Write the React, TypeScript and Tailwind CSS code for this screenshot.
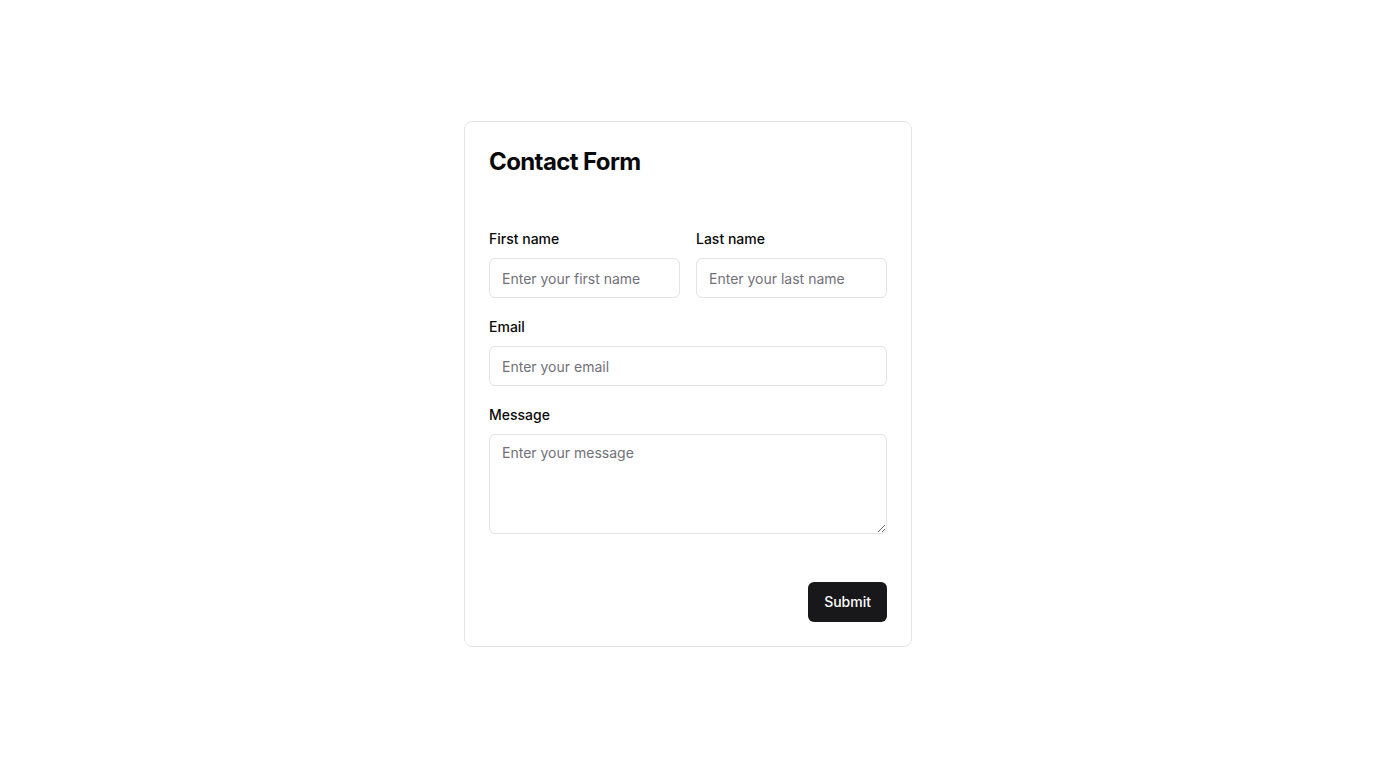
import { useState } from "react";

const inputClass =
  "w-full h-10 rounded-md border border-[#e4e4e7] bg-white px-3 text-sm text-[#09090b] placeholder:text-[#71717a] focus:outline-none";

const labelClass = "text-sm leading-[26px] font-medium";

const ContactForm = () => {
  const [firstName, setFirstName] = useState("");
  const [lastName, setLastName] = useState("");
  const [email, setEmail] = useState("");
  const [message, setMessage] = useState("");

  return (
    <div
      className="min-h-screen w-full bg-white flex items-center justify-center text-[#09090b]"
      style={{ fontFamily: "Inter, 'Noto Sans', sans-serif" }}
    >
      <div className="w-[448px] rounded-lg border border-[#e4e4e7] bg-white p-6 flex flex-col">
        <h1 className="text-2xl font-bold tracking-tight">Contact Form</h1>

        <form
          className="mt-12 flex flex-col gap-4"
          onSubmit={(e) => e.preventDefault()}
        >
          <div className="grid grid-cols-2 gap-4">
            <div className="flex flex-col gap-1.5">
              <label htmlFor="firstName" className={labelClass}>
                First name
              </label>
              <input
                id="firstName"
                type="text"
                placeholder="Enter your first name"
                value={firstName}
                onChange={(e) => setFirstName(e.target.value)}
                className={inputClass}
              />
            </div>
            <div className="flex flex-col gap-1.5">
              <label htmlFor="lastName" className={labelClass}>
                Last name
              </label>
              <input
                id="lastName"
                type="text"
                placeholder="Enter your last name"
                value={lastName}
                onChange={(e) => setLastName(e.target.value)}
                className={inputClass}
              />
            </div>
          </div>

          <div className="flex flex-col gap-1.5">
            <label htmlFor="email" className={labelClass}>
              Email
            </label>
            <input
              id="email"
              type="email"
              placeholder="Enter your email"
              value={email}
              onChange={(e) => setEmail(e.target.value)}
              className={inputClass}
            />
          </div>

          <div className="flex flex-col gap-1.5">
            <label htmlFor="message" className={labelClass}>
              Message
            </label>
            <textarea
              id="message"
              placeholder="Enter your message"
              value={message}
              onChange={(e) => setMessage(e.target.value)}
              className="block w-full h-[100px] rounded-md border border-[#e4e4e7] bg-white px-3 py-2 text-sm leading-5 text-[#09090b] placeholder:text-[#71717a] focus:outline-none"
            />
          </div>

          <div className="flex justify-end mt-8">
            <button
              type="submit"
              className="h-10 px-4 rounded-md bg-[#18181b] text-white text-sm font-medium"
            >
              Submit
            </button>
          </div>
        </form>
      </div>
    </div>
  );
};

export default ContactForm;
